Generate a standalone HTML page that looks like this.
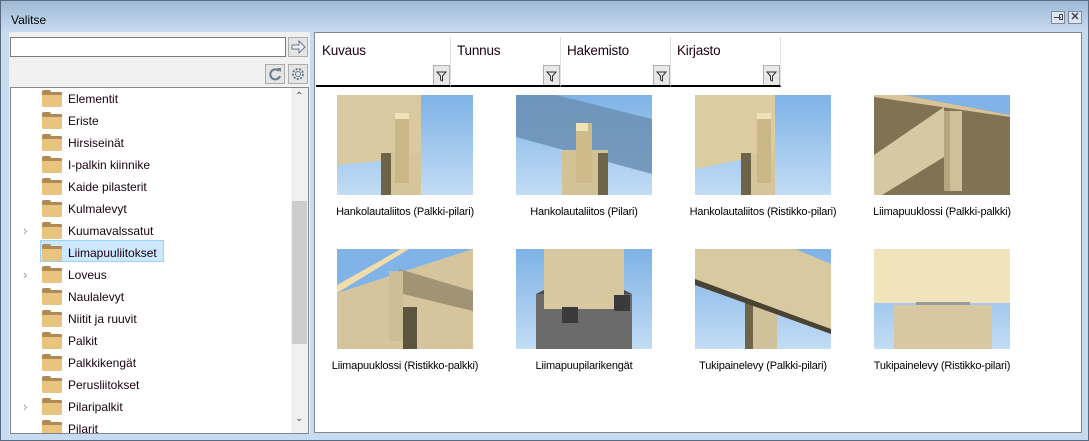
<!DOCTYPE html>
<html><head><meta charset="utf-8"><style>
*{margin:0;padding:0;box-sizing:border-box}
body{width:1089px;height:441px;overflow:hidden;font-family:"Liberation Sans",sans-serif;font-size:12px;color:#1a0010;background:#c9dbef}
.win{position:absolute;left:0;top:0;width:1089px;height:441px;border:1px solid #5a6b80;background:linear-gradient(#9fb9d6,#c6daf0 30px,#c6daf0)}
.title{position:absolute;left:10px;top:12px;font-size:12px;color:#000}
.tb{position:absolute;top:10px;width:14px;height:13px;border:1px solid #7a8a9c;background:#dce7f3}
.left{position:absolute;left:8px;top:31px;width:301px;height:402px;background:#f0f0f0}
.search{position:absolute;left:1px;top:5px;width:276px;height:20px;border:1px solid #7a7a7a;background:#fff}
.btn{position:absolute;width:20px;height:20px;border:1px solid #adadad;background:#e5e5e5}
.tree{position:absolute;left:1px;top:55px;width:299px;height:347px;border:1px solid #828790;background:#fff;overflow:hidden}
.row{position:absolute;left:0;height:22px;line-height:22px;font-size:12px}
.row .f{position:absolute;left:31px;top:4px;width:20px;height:15px;background:#e8c47e;border-radius:1px;border-top:3px solid #b08a55}
.row .f:before{content:"";position:absolute;left:0;top:-5px;width:9px;height:3px;background:#b08a55;border-radius:2px 2px 0 0}
.row .t{position:absolute;left:57px;white-space:nowrap}
.row .x{position:absolute;left:12px;color:#999;font-size:13px}
.sel{position:absolute;left:29px;width:124px;height:22px;background:#cce8ff;border:1px solid #99d1ff}
.sb{position:absolute;right:0;top:0;width:17px;height:345px;background:#f0f0f0}
.right{position:absolute;left:313px;top:31px;width:768px;height:401px;border:1px solid #828790;background:#fff}
.col{position:absolute;top:4px;height:50px;border-right:1px solid #e0e0e0;border-bottom:2px solid #000}
.col span{position:absolute;left:6px;top:6px;font-size:13.5px;letter-spacing:-0.2px}
.fb{position:absolute;right:0;bottom:0;width:17px;height:20px;border:1px solid #adadad;background:#e8e8e8;border-bottom:none}
.cap{position:absolute;width:180px;text-align:center;font-size:11px;color:#000;letter-spacing:-0.2px}
.img{position:absolute;width:136px;height:100px}
</style></head><body>
<div class="win">
<div class="title">Valitse</div>
<div class="tb" style="left:1050px"><div style="position:absolute;left:2px;top:5px;width:7px;height:1px;background:#445"></div><div style="position:absolute;left:7px;top:2px;width:4px;height:6px;border:1px solid #445"></div></div>
<div class="tb" style="left:1067px;font-size:11px;line-height:11px;text-align:center;font-weight:bold;color:#445">✕</div>

<div class="left">
 <div class="search"></div>
 <div class="btn" style="left:279px;top:5px"><svg width="18" height="18"><path d="M3 7h7V3l6 6-6 6v-4H3z" fill="#eef" stroke="#6a7a8a"/></svg></div>
 <div class="btn" style="left:256px;top:32px"><svg width="18" height="18"><path d="M13 6a5 5 0 1 0 1 5" fill="none" stroke="#6a7a8a" stroke-width="2"/><path d="M11 3l4 0 0 4z" fill="#6a7a8a"/></svg></div>
 <div class="btn" style="left:279px;top:32px"><svg width="18" height="18"><circle cx="9" cy="9" r="5" fill="none" stroke="#6a7a8a" stroke-width="2" stroke-dasharray="2 1.5"/><circle cx="9" cy="9" r="2.5" fill="none" stroke="#6a7a8a"/></svg></div>
 <div class="tree">
  <div class="sel" style="top:152px"></div>
  <div class="row" style="top:0px"><i class="f"></i><span class="t">Elementit</span></div>
  <div class="row" style="top:22px"><i class="f"></i><span class="t">Eriste</span></div>
  <div class="row" style="top:44px"><i class="f"></i><span class="t">Hirsiseinät</span></div>
  <div class="row" style="top:66px"><i class="f"></i><span class="t">I-palkin kiinnike</span></div>
  <div class="row" style="top:88px"><i class="f"></i><span class="t">Kaide pilasterit</span></div>
  <div class="row" style="top:110px"><i class="f"></i><span class="t">Kulmalevyt</span></div>
  <div class="row" style="top:132px"><span class="x">›</span><i class="f"></i><span class="t">Kuumavalssatut</span></div>
  <div class="row" style="top:154px"><i class="f"></i><span class="t">Liimapuuliitokset</span></div>
  <div class="row" style="top:176px"><span class="x">›</span><i class="f"></i><span class="t">Loveus</span></div>
  <div class="row" style="top:198px"><i class="f"></i><span class="t">Naulalevyt</span></div>
  <div class="row" style="top:220px"><i class="f"></i><span class="t">Niitit ja ruuvit</span></div>
  <div class="row" style="top:242px"><i class="f"></i><span class="t">Palkit</span></div>
  <div class="row" style="top:264px"><i class="f"></i><span class="t">Palkkikengät</span></div>
  <div class="row" style="top:286px"><i class="f"></i><span class="t">Perusliitokset</span></div>
  <div class="row" style="top:308px"><span class="x">›</span><i class="f"></i><span class="t">Pilaripalkit</span></div>
  <div class="row" style="top:330px"><i class="f"></i><span class="t">Pilarit</span></div>
  <div class="sb"><div style="position:absolute;left:1px;top:113px;width:15px;height:143px;background:#cdcdcd"></div>
   <div style="position:absolute;left:4px;top:3px;font-size:10px;color:#555">⌃</div>
   <div style="position:absolute;left:4px;top:325px;font-size:10px;color:#555">⌄</div></div>
 </div>
</div>

<div class="right">
 <div class="col" style="left:1px;width:135px"><span>Kuvaus</span><div class="fb"><svg width="15" height="18"><path d="M3 6h9l-3.5 4v5l-2-1v-4z" fill="none" stroke="#333"/></svg></div></div>
 <div class="col" style="left:136px;width:110px"><span>Tunnus</span><div class="fb"><svg width="15" height="18"><path d="M3 6h9l-3.5 4v5l-2-1v-4z" fill="none" stroke="#333"/></svg></div></div>
 <div class="col" style="left:246px;width:110px"><span>Hakemisto</span><div class="fb"><svg width="15" height="18"><path d="M3 6h9l-3.5 4v5l-2-1v-4z" fill="none" stroke="#333"/></svg></div></div>
 <div class="col" style="left:356px;width:110px"><span>Kirjasto</span><div class="fb"><svg width="15" height="18"><path d="M3 6h9l-3.5 4v5l-2-1v-4z" fill="none" stroke="#333"/></svg></div></div>
</div>

<svg class="img" style="left:336px;top:94px" viewBox="0 0 136 100"><defs><linearGradient id="sky" x1="0" y1="0" x2="0" y2="1"><stop offset="0" stop-color="#7eb2e6"/><stop offset="1" stop-color="#c2dcf4"/></linearGradient></defs><rect width="136" height="100" fill="url(#sky)"/><path d="M0 0h84v62L0 70z" fill="#d9c9a0"/><rect x="44" y="58" width="40" height="42" fill="#d6c59a"/><rect x="44" y="58" width="10" height="42" fill="#6e6448"/><rect x="58" y="18" width="14" height="70" fill="#c9b788"/><rect x="58" y="18" width="14" height="6" fill="#efe2b5"/></svg>
<svg class="img" style="left:515px;top:94px" viewBox="0 0 136 100"><rect width="136" height="100" fill="url(#sky)"/><path d="M0 0h40l96 24v55L0 42z" fill="#6b8fb4" opacity=".85"/><rect x="46" y="55" width="46" height="45" fill="#d3c296"/><rect x="82" y="58" width="10" height="42" fill="#6e6448"/><rect x="60" y="28" width="16" height="60" fill="#cdbb8c"/><rect x="60" y="28" width="12" height="8" fill="#efe2b5"/></svg>
<svg class="img" style="left:694px;top:94px" viewBox="0 0 136 100"><rect width="136" height="100" fill="url(#sky)"/><path d="M0 0h80v58L0 74z" fill="#dccca2"/><rect x="46" y="58" width="34" height="42" fill="#d6c59a"/><rect x="46" y="58" width="10" height="42" fill="#6e6448"/><rect x="62" y="18" width="14" height="70" fill="#c9b788"/><rect x="62" y="18" width="14" height="6" fill="#efe2b5"/></svg>
<svg class="img" style="left:873px;top:94px" viewBox="0 0 136 100"><rect width="136" height="100" fill="#807252"/><path d="M30 0h106v20z" fill="#80b4e8"/><path d="M0 0h30l106 20v2L0 2z" fill="#d9c49a"/><path d="M0 60l70-48v50L8 100H0z" fill="#d6c8a2"/><rect x="70" y="16" width="18" height="80" fill="#cfc09a"/><rect x="70" y="16" width="6" height="80" fill="#b5a67e"/></svg>
<svg class="img" style="left:336px;top:248px" viewBox="0 0 136 100"><rect width="136" height="100" fill="#80b4e8"/><path d="M0 44L136 0v100H0z" fill="#d6c49c"/><path d="M0 36L64 0h8L0 44z" fill="#f2dcaa"/><path d="M62 20l74 22v20L62 44z" fill="#a09474"/><rect x="52" y="22" width="14" height="70" fill="#cbbd95"/><rect x="66" y="58" width="14" height="42" fill="#5c543e"/></svg>
<svg class="img" style="left:515px;top:248px" viewBox="0 0 136 100"><rect width="136" height="100" fill="url(#sky)"/><path d="M20 45h96v55H20z" fill="#6b6b6b"/><path d="M20 45l10-5h76l10 5z" fill="#4a4a4a"/><rect x="28" y="0" width="80" height="60" fill="#d8c8a0"/><rect x="46" y="58" width="16" height="16" fill="#3a3a3a"/><rect x="98" y="46" width="16" height="16" fill="#3a3a3a"/></svg>
<svg class="img" style="left:694px;top:248px" viewBox="0 0 136 100"><rect width="136" height="100" fill="url(#sky)"/><rect x="50" y="50" width="32" height="50" fill="#d0c19c"/><rect x="50" y="50" width="8" height="50" fill="#6e6448"/><path d="M0 0h100l36 15v65L0 30z" fill="#d9c9a0"/><path d="M0 30l136 50v5L0 36z" fill="#4a4232"/></svg>
<svg class="img" style="left:873px;top:248px" viewBox="0 0 136 100"><rect width="136" height="100" fill="url(#sky)"/><rect width="136" height="54" fill="#f1e4bd"/><rect x="42" y="53" width="54" height="3" fill="#999"/><rect x="20" y="56" width="98" height="44" fill="#d8c8a2"/></svg>

<div class="cap" style="left:314px;top:205px">Hankolautaliitos (Palkki-pilari)</div>
<div class="cap" style="left:493px;top:205px">Hankolautaliitos (Pilari)</div>
<div class="cap" style="left:672px;top:205px">Hankolautaliitos (Ristikko-pilari)</div>
<div class="cap" style="left:851px;top:205px">Liimapuuklossi (Palkki-palkki)</div>
<div class="cap" style="left:314px;top:359px">Liimapuuklossi (Ristikko-palkki)</div>
<div class="cap" style="left:493px;top:359px">Liimapuupilarikengät</div>
<div class="cap" style="left:672px;top:359px">Tukipainelevy (Palkki-pilari)</div>
<div class="cap" style="left:851px;top:359px">Tukipainelevy (Ristikko-pilari)</div>
</div>
</body></html>
